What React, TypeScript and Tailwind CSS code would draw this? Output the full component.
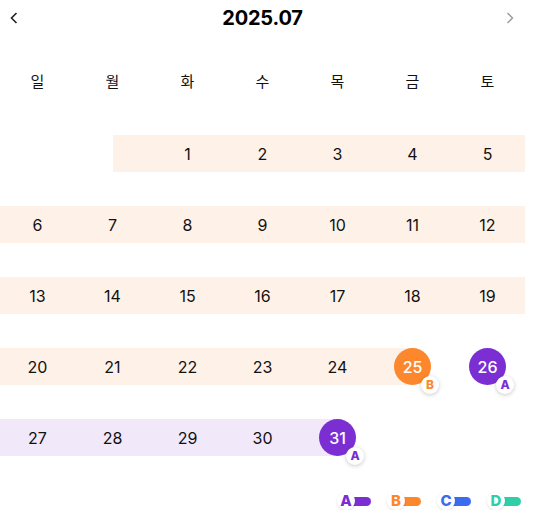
import React from "react";

type Mark = { letter: "A" | "B" | "C" | "D" };

const colors = {
  A: "#7b2fd2",
  B: "#fd872d",
  C: "#3a6cf0",
  D: "#2ecfa7",
};

const textColor = {
  A: "text-[#7b2fd2]",
  B: "text-[#fd872d]",
  C: "text-[#3a6cf0]",
  D: "text-[#2ecfa7]",
};

const circleBg = {
  A: "bg-[#7b2fd2]",
  B: "bg-[#fd872d]",
  C: "bg-[#3a6cf0]",
  D: "bg-[#2ecfa7]",
};

// band: "full" | "right" | "left" | null ; tint: orange | purple
type Cell = {
  day?: number;
  band?: "full" | "right" | "left";
  tint?: "orange" | "purple";
  mark?: Mark["letter"];
};

const O = "orange" as const;
const P = "purple" as const;

const weeks: Cell[][] = [
  [
    {},
    { band: "right", tint: O },
    { day: 1, band: "full", tint: O },
    { day: 2, band: "full", tint: O },
    { day: 3, band: "full", tint: O },
    { day: 4, band: "full", tint: O },
    { day: 5, band: "full", tint: O },
  ],
  [6, 7, 8, 9, 10, 11, 12].map((d) => ({ day: d, band: "full", tint: O })),
  [13, 14, 15, 16, 17, 18, 19].map((d) => ({ day: d, band: "full", tint: O })),
  [
    { day: 20, band: "full", tint: O },
    { day: 21, band: "full", tint: O },
    { day: 22, band: "full", tint: O },
    { day: 23, band: "full", tint: O },
    { day: 24, band: "full", tint: O },
    { day: 25, band: "left", tint: O, mark: "B" },
    { day: 26, mark: "A" },
  ],
  [
    { day: 27, band: "full", tint: P },
    { day: 28, band: "full", tint: P },
    { day: 29, band: "full", tint: P },
    { day: 30, band: "full", tint: P },
    { day: 31, band: "left", tint: P, mark: "A" },
    {},
    {},
  ],
];

const tintBg = { orange: "bg-[#fef1e8]", purple: "bg-[#f1e8fa]" };

function DayCell({ cell }: { cell: Cell }) {
  return (
    <div className="relative flex h-[37px] items-center justify-center">
      {cell.band === "full" && cell.tint && (
        <div className={`absolute inset-0 ${tintBg[cell.tint]}`} />
      )}
      {cell.band === "right" && cell.tint && (
        <div className={`absolute inset-y-0 left-1/2 right-0 ${tintBg[cell.tint]}`} />
      )}
      {cell.band === "left" && cell.tint && (
        <div className={`absolute inset-y-0 left-0 right-1/2 ${tintBg[cell.tint]}`} />
      )}
      {cell.day !== undefined && !cell.mark && (
        <span className="relative text-[16px] text-[#111]">{cell.day}</span>
      )}
      {cell.mark && (
        <div
          className={`relative flex h-[37px] w-[37px] items-center justify-center rounded-full ${circleBg[cell.mark]}`}
        >
          <span className="text-[16px] font-medium text-white">{cell.day}</span>
          <span
            className={`absolute -bottom-[9px] -right-[8px] flex h-[18px] w-[18px] items-center justify-center rounded-full bg-white text-[12px] font-extrabold shadow-[0_1px_4px_rgba(0,0,0,0.22)] ${textColor[cell.mark]}`}
          >
            {cell.mark}
          </span>
        </div>
      )}
    </div>
  );
}

function LegendItem({ letter }: { letter: Mark["letter"] }) {
  return (
    <div className="relative h-[18px] w-[36px]">
      <div
        className="absolute left-[9px] top-[4.5px] h-[9px] w-[25px] rounded-r-full"
        style={{ backgroundColor: colors[letter] }}
      />
      <div
        className={`absolute left-0 top-0 flex h-[18px] w-[18px] items-center justify-center rounded-full bg-white text-[15px] font-extrabold shadow-[0_1px_3px_rgba(0,0,0,0.12)] ${textColor[letter]}`}
      >
        {letter}
      </div>
    </div>
  );
}

export default function App() {
  const days = ["일", "월", "화", "수", "목", "금", "토"];
  return (
    <div className="w-[525px] bg-white font-['Inter','Noto_Sans_CJK_KR',sans-serif]">
      <div className="flex h-[36px] items-center justify-between">
        <div className="flex w-[40px] pl-[10px]">
          <svg width="8" height="12" viewBox="0 0 8 12">
            <polyline points="6.5,1 1.5,6 6.5,11" fill="none" stroke="#222" strokeWidth="1.6" />
          </svg>
        </div>
        <div className="text-[20px] font-bold tracking-[-0.2px] text-black">2025.07</div>
        <div className="flex w-[40px] justify-end pr-[11px]">
          <svg width="8" height="12" viewBox="0 0 8 12">
            <polyline points="1.5,1 6.5,6 1.5,11" fill="none" stroke="#999" strokeWidth="1.4" />
          </svg>
        </div>
      </div>

      <div className="mt-[27px] grid h-[36px] grid-cols-7 items-center">
        {days.map((d) => (
          <div key={d} className="text-center font-['Noto_Sans_CJK_KR',sans-serif] text-[15px] text-[#111]">
            {d}
          </div>
        ))}
      </div>

      <div className="mt-[36px]">
        {weeks.map((w, i) => (
          <div key={i} className="grid h-[71px] grid-cols-7 content-start">
            {w.map((c, j) => (
              <DayCell key={j} cell={c} />
            ))}
          </div>
        ))}
      </div>

      <div className="mt-[2px] flex justify-end gap-[14px] pr-[2px]">
        <LegendItem letter="A" />
        <LegendItem letter="B" />
        <LegendItem letter="C" />
        <LegendItem letter="D" />
      </div>
    </div>
  );
}
